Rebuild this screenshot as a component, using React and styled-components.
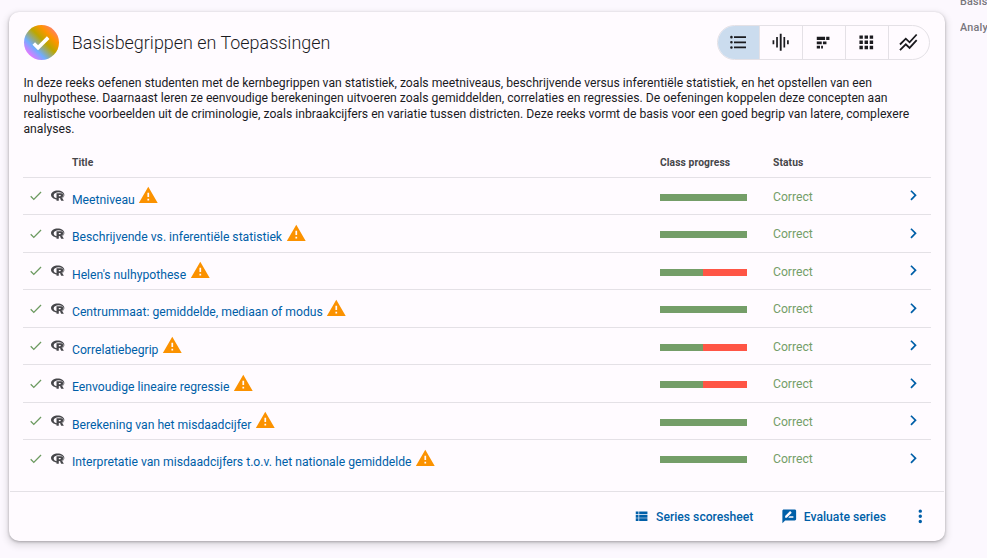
import React from "react";
import styled, { createGlobalStyle } from "styled-components";

const GlobalStyle = createGlobalStyle`
  * { box-sizing: border-box; }
  html, body { margin: 0; height: 558px; overflow: hidden; background: #fcf8fe; }
  body {
    font-family: Roboto, "Liberation Sans", sans-serif;
    font-size: 12.18px;
    color: #1b1b1f;
  }
`;

const Page = styled.div`
  display: flex;
  gap: 15px;
  width: 987px;
  height: 558px;
  padding: 12px 0 0 9px;
  overflow: hidden;
`;

const Card = styled.section`
  display: flex;
  flex-direction: column;
  flex: none;
  width: 936px;
  height: 529px;
  background: #fffbff;
  border-radius: 10px;
  box-shadow: 0 1px 3px rgba(0, 0, 0, 0.28), 0 3px 7px 2px rgba(0, 0, 0, 0.11);
`;

const Header = styled.header`
  display: flex;
  align-items: center;
  height: 35px;
  margin: 13px 15px 0 14.5px;
`;

const Badge = styled.div`
  display: grid;
  place-items: center;
  width: 35px;
  height: 35px;
  border-radius: 50%;
  background: linear-gradient(45deg, #f57cff 10%, #dc7cff 16%, #6fadff 32%, #bca600 55%, #ff9500 72%, #ff8060 86%);
`;

const Heading = styled.h1`
  flex: 1;
  margin: 1px 0 0 13.3px;
  font-size: 17.96px;
  line-height: 28px;
  font-weight: 300;
`;

const Segments = styled.div`
  display: grid;
  grid-template-columns: 41px 43px 43px 43px 1fr;
  width: 213px;
  height: 35px;
  border: 1px solid #e4e1e6;
  border-radius: 18px;
  overflow: hidden;
`;

const Segment = styled.button`
  display: grid;
  place-items: center;
  padding: 0 ${(p) => (p.$first ? "0" : "1px")} 0 0;
  border: 0;
  border-left: ${(p) => (p.$first ? "0" : "1px solid #e4e1e6")};
  background: ${(p) => (p.$active ? "#cbdcee" : "transparent")};
  color: #1b1b1f;
`;

const Description = styled.p`
  height: 62px;
  margin: 15.9px 22px 0 14.5px;
  line-height: 15.43px;
`;

const Table = styled.div`
  margin: 9px 14px 0;
`;

const Row = styled.div`
  display: grid;
  grid-template-columns: 24.6px 24.4px 588px 113px 130.2px 1fr;
  align-items: center;
  height: ${(p) => (p.$head ? "31px" : "37.5px")};
  border-bottom: 1px solid ${(p) => (p.$last ? "transparent" : "#e4e1e6")};
`;

const HeadCell = styled.div`
  padding-top: 2px;
  font-size: 10.29px;
  font-weight: 700;
  letter-spacing: 0.09px;
  color: #46464a;
`;

const IconCell = styled.div`
  display: flex;
  padding: 0 0 0.8px ${(p) => p.$pad};
  color: ${(p) => p.$color};
`;

const TitleCell = styled.div`
  display: flex;
  align-items: center;
  gap: 3.6px;
  color: #005fa8;

  svg { margin-bottom: 0.8px; color: #fb9200; }
`;

const TitleLink = styled.span`
  padding-top: 6.8px;
  white-space: nowrap;
`;

const Progress = styled.div`
  width: 87px;
  height: 7px;
  margin-top: 2px;
  background: #ff5545;
`;

const ProgressDone = styled.div`
  width: ${(p) => p.$value}%;
  height: 100%;
  background: #749e68;
`;

const Status = styled.div`
  padding-top: 1.4px;
  color: #749e68;
`;

const Footer = styled.footer`
  display: flex;
  align-items: center;
  justify-content: flex-end;
  height: 50px;
  margin: auto 1px 0;
  padding-right: 13px;
  border-top: 1px solid #e4e1e6;
  color: #005fa8;
`;

const Action = styled.button`
  display: flex;
  align-items: center;
  gap: 6.4px;
  margin-right: ${(p) => p.$after};
  padding: 0;
  border: 0;
  background: none;
  font: 500 12.17px/16px Roboto, sans-serif;
  color: inherit;
`;

const ActionLabel = styled.span`
  padding-top: 1px;
`;

const SideNav = styled.nav`
  display: flex;
  flex-direction: column;
  gap: 11.5px;
  width: 27px;
  margin-top: -17px;
  overflow: hidden;
  white-space: nowrap;
  font-size: 10.8px;
  line-height: 14px;
  font-weight: 500;
  letter-spacing: 0.2px;
  color: #77767c;
`;

const Svg = styled.svg`
  display: block;
  flex: none;
  fill: currentColor;
`;

const PATHS = {
  badgeCheck: "M9,20.42L2.79,14.21L5.62,11.38L9,14.77L18.88,4.88L21.71,7.71L9,20.42Z",
  check: "M21,7L9,19L3.5,13.5L4.91,12.09L9,16.17L19.59,5.59L21,7Z",
  alert: "M13 14H11V9H13M13 18H11V16H13M1 21H23L12 2L1 21Z",
  chevron: "M8.59,16.58L13.17,12L8.59,7.41L10,6L16,12L10,18L8.59,16.58Z",
  dots: "M12,16A2,2 0 0,1 14,18A2,2 0 0,1 12,20A2,2 0 0,1 10,18A2,2 0 0,1 12,16M12,10A2,2 0 0,1 14,12A2,2 0 0,1 12,14A2,2 0 0,1 10,12A2,2 0 0,1 12,10M12,4A2,2 0 0,1 14,6A2,2 0 0,1 12,8A2,2 0 0,1 10,6A2,2 0 0,1 12,4Z",
  sheet: "M9,5V9H21V5M9,19H21V15H9M9,14H21V10H9M4,9H8V5H4M4,19H8V15H4M4,14H8V10H4V14Z",
  evaluate: "M18 14H10.5L12.5 12H18M6 14V11.5L12.88 4.64C13.07 4.45 13.39 4.45 13.59 4.64L15.35 6.41C15.55 6.61 15.55 6.92 15.35 7.12L8.47 14M20 2H4C2.9 2 2 2.9 2 4V22L6 18H20C21.1 18 22 17.1 22 16V4C22 2.9 21.1 2 20 2Z",
  r: "M11.956 4.05c-5.694 0-10.354 3.106-10.354 6.947 0 3.396 3.686 6.212 8.531 6.813v2.205h3.53V17.82c.88-.093 1.699-.259 2.475-.497l1.43 2.692h3.996l-2.402-4.048c1.936-1.263 3.147-3.034 3.147-4.97 0-3.841-4.659-6.947-10.354-6.947m1.584 2.712c4.349 0 7.558 1.45 7.558 4.753 0 1.77-.952 3.013-2.505 3.779a1.081 1.081 0 0 1-.228-.156c-.373-.165-.994-.352-.994-.352s3.085-.227 3.085-3.302-3.23-3.127-3.23-3.127h-7.092v7.413c-2.64-.766-4.462-2.392-4.462-4.255 0-2.63 3.52-4.753 7.868-4.753m.156 4.12h2.143s.983-.05.983.974c0 1.004-.983 1.004-.983 1.004h-2.143v-1.978m0 4.525h.7c.341 0 .549.052 1.004.393.28.145.651.642.651.642l.807 1.418c-.983.145-1.967.217-3.162.217v-2.67z",
  list: "M7,5H21V7H7V5M7,13V11H21V13H7M4,4.5A1.5,1.5 0 0,1 5.5,6A1.5,1.5 0 0,1 4,7.5A1.5,1.5 0 0,1 2.5,6A1.5,1.5 0 0,1 4,4.5M4,10.5A1.5,1.5 0 0,1 5.5,12A1.5,1.5 0 0,1 4,13.5A1.5,1.5 0 0,1 2.5,12A1.5,1.5 0 0,1 4,10.5M7,19V17H21V19H7M4,16.5A1.5,1.5 0 0,1 5.5,18A1.5,1.5 0 0,1 4,19.5A1.5,1.5 0 0,1 2.5,18A1.5,1.5 0 0,1 4,16.5Z",
  violin: "M3 9.7h2v4.6h-2zM7.2 5.8h2v12.4h-2zM11.4 2h2.2v20h-2.2zM15.7 5.8h2v12.4h-2zM19.9 9.7h2v4.6h-2z",
  stacked: "M4.4 5.5H14.1V9.3H4.4zM15.4 5.5H19.2V9.3H15.4zM4.4 11H10.2V14.3H4.4zM11.6 11H15.7V14.3H11.6zM4.4 16H8.2V19.3H4.4zM9.5 16H11.6V19.3H9.5z",
  grid: "M16,20H20V16H16M16,14H20V10H16M10,8H14V4H10M16,8H20V4H16M10,14H14V10H10M4,14H8V10H4M4,20H8V16H4M10,20H14V16H10M4,8H8V4H4V8Z",
};

function Icon({ name, size = 20.57 }) {
  return (
    <Svg width={size} height={size} viewBox="0 0 24 24" aria-hidden="true">
      <path d={PATHS[name]} />
    </Svg>
  );
}

function TimeSeriesIcon() {
  return (
    <Svg width="20.57" height="20.57" viewBox="0 0 24 24" aria-hidden="true">
      <g fill="none" stroke="currentColor" strokeWidth="2.1">
        <path d="M2.3 14.6L9.1 7.8L13.5 12L21.8 2.9" />
        <path d="M2.3 21.2L9.1 14.4L13.5 18.6L21.8 9.5" />
      </g>
    </Svg>
  );
}

const ROWS = [
  ["Meetniveau", 100],
  ["Beschrijvende vs. inferentiële statistiek", 100],
  ["Helen's nulhypothese", 50],
  ["Centrummaat: gemiddelde, mediaan of modus", 100],
  ["Correlatiebegrip", 50],
  ["Eenvoudige lineaire regressie", 50],
  ["Berekening van het misdaadcijfer", 100],
  ["Interpretatie van misdaadcijfers t.o.v. het nationale gemiddelde", 100],
];

export default function App() {
  return (
    <>
      <GlobalStyle />
      <Page>
        <Card>
          <Header>
            <Badge>
              <Svg width="21.5" height="21.5" viewBox="0 0 24 24" color="#fff">
                <path d={PATHS.badgeCheck} />
              </Svg>
            </Badge>
            <Heading>Basisbegrippen en Toepassingen</Heading>
            <Segments>
              <Segment $first $active><Icon name="list" /></Segment>
              <Segment><Icon name="violin" /></Segment>
              <Segment><Icon name="stacked" /></Segment>
              <Segment><Icon name="grid" /></Segment>
              <Segment><TimeSeriesIcon /></Segment>
            </Segments>
          </Header>
          <Description>
            In deze reeks oefenen studenten met de kernbegrippen van statistiek, zoals meetniveaus,
            beschrijvende versus inferentiële statistiek, en het opstellen van een nulhypothese.
            Daarnaast leren ze eenvoudige berekeningen uitvoeren zoals gemiddelden, correlaties en
            regressies. De oefeningen koppelen deze concepten aan realistische voorbeelden uit de
            criminologie, zoals inbraakcijfers en variatie tussen districten. Deze reeks vormt de
            basis voor een goed begrip van latere, complexere analyses.
          </Description>
          <Table>
            <Row $head>
              <span />
              <span />
              <HeadCell>Title</HeadCell>
              <HeadCell>Class progress</HeadCell>
              <HeadCell>Status</HeadCell>
            </Row>
            {ROWS.map(([title, value], i) => (
              <Row key={title} $last={i === ROWS.length - 1}>
                <IconCell $pad="4.5px" $color="#6c9a60"><Icon name="check" size={15.43} /></IconCell>
                <IconCell $pad="2.1px" $color="#46464a"><Icon name="r" size={15.43} /></IconCell>
                <TitleCell>
                  <TitleLink>{title}</TitleLink>
                  <Icon name="alert" />
                </TitleCell>
                <Progress><ProgressDone $value={value} /></Progress>
                <Status>Correct</Status>
                <IconCell $pad="0.2px" $color="#005fa8"><Icon name="chevron" /></IconCell>
              </Row>
            ))}
          </Table>
          <Footer>
            <Action $after="27.5px">
              <Icon name="sheet" size={16.5} />
              <ActionLabel>Series scoresheet</ActionLabel>
            </Action>
            <Action $after="24.5px">
              <Icon name="evaluate" size={16.5} />
              <ActionLabel>Evaluate series</ActionLabel>
            </Action>
            <Icon name="dots" />
          </Footer>
        </Card>
        <SideNav>
          <span>Basisbegrippen</span>
          <span>Analyse</span>
        </SideNav>
      </Page>
    </>
  );
}
